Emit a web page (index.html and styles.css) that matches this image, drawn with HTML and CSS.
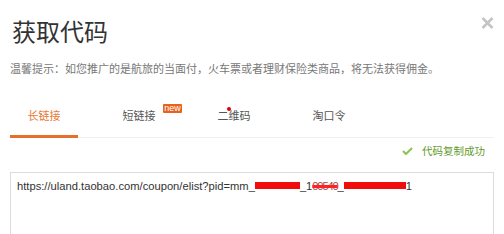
FILE: index.html
```html
<!DOCTYPE html>
<html lang="zh-CN">
<head>
<meta charset="utf-8">
<title>获取代码</title>
<link rel="stylesheet" href="styles.css">
</head>
<body>
<div class="dialog">
  <div class="header">
    <h1 class="title">获取代码</h1>
    <span class="close" aria-label="关闭">
      <svg width="13" height="12" viewBox="0 0 13 12"><path d="M1.5 1 L11.5 11 M11.5 1 L1.5 11" stroke="#c4c4c4" stroke-width="2.6" stroke-linecap="butt"/></svg>
    </span>
  </div>
  <p class="hint">温馨提示：如您推广的是航旅的当面付，火车票或者理财保险类商品，将无法获得佣金。</p>
  <div class="tabs">
    <div class="tab active">长链接</div>
    <div class="tab">短链接<span class="badge">new</span></div>
    <div class="tab"><span class="dot-wrap">二<span class="dot"></span></span>维码</div>
    <div class="tab">淘口令</div>
  </div>
  <div class="status">
    <svg class="check" width="11" height="8" viewBox="0 0 11 8"><path d="M1 4 L4 7 L10 1" fill="none" stroke="#8dc153" stroke-width="2"/></svg>
    <span class="status-text">代码复制成功</span>
  </div>
  <div class="code-box">https://uland.taobao.com/coupon/elist?pid=mm_<span class="redact r1"></span>_1<span class="smudge">00540</span>_<span class="redact r2"></span>1</div>
</div>
</body>
</html>
```

FILE: styles.css
```css
* { box-sizing: border-box; }
html, body { margin: 0; padding: 0; background: #fff; }
body {
  font-family: "Noto Sans CJK SC", "Liberation Sans", sans-serif;
  color: #333;
  width: 504px;
  height: 234px;
  overflow: hidden;
}
.dialog { padding: 0 10px 0 10px; }
.header {
  display: flex;
  justify-content: space-between;
  align-items: flex-start;
  padding-top: 18px;
  height: 60px;
}
.title {
  margin: 0 0 0 2px;
  font-size: 24px;
  line-height: 26px;
  font-weight: 400;
  color: #333;
}
.close { display: block; margin-top: -1px; margin-right: 0; }
.close svg { display: block; }
.hint {
  margin: 0;
  font-size: 11px;
  line-height: 16px;
  color: #777;
}
.tabs {
  display: flex;
  gap: 27px;
  margin-top: 24px;
  border-bottom: 1px solid #f0f0f0;
  height: 38px;
}
.tab {
  position: relative;
  width: 68px;
  text-align: center;
  font-size: 11px;
  line-height: 16px;
  padding-top: 7px;
  color: #555;
}
.tab.active {
  color: #e87a34;
  border-bottom: 3px solid #e5702a;
  margin-bottom: -1px;
}
.badge {
  position: absolute;
  left: 58px;
  top: 4px;
  width: 19px;
  height: 9px;
  background: #e8621d;
  color: #fff;
  font-family: "Liberation Sans", sans-serif;
  font-size: 9px;
  line-height: 8px;
  border-radius: 1px;
  text-align: center;
}
.dot-wrap { position: relative; }
.dot {
  position: absolute;
  right: -2px;
  top: 0px;
  width: 4px;
  height: 4px;
  border-radius: 50%;
  background: #d8000c;
}
.status {
  display: flex;
  justify-content: flex-end;
  align-items: center;
  gap: 9px;
  height: 34px;
  padding-right: 9px;
  padding-bottom: 8px;
}
.check { display: block; }
.status-text {
  font-size: 10.5px;
  line-height: 16px;
  color: #5f9a2b;
}
.code-box {
  border: 1px solid #dcdcdc;
  height: 90px;
  padding: 5px 6px;
  font-family: "Liberation Sans", "Noto Sans CJK SC", sans-serif;
  font-size: 11.2px;
  line-height: 16px;
  color: #333;
}
.redact {
  display: inline-block;
  height: 7px;
  background: #f20d0d;
  vertical-align: 1px;
}
.r1 { width: 45px; }
.r2 { width: 62px; }
.smudge {
  color: #a44;
  letter-spacing: -1.2px;
  text-decoration: line-through;
  text-decoration-color: #f22;
  text-decoration-thickness: 3px;
}
```
